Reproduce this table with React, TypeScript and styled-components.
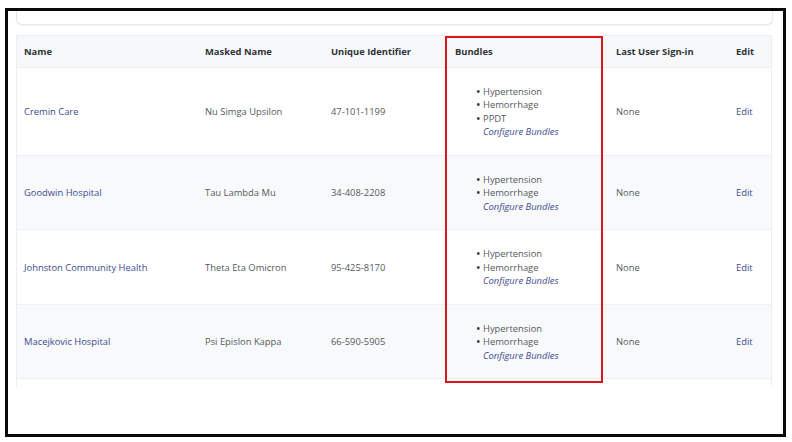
import React from "react";
import styled, { createGlobalStyle } from "styled-components";

const Global = createGlobalStyle`
  html, body { margin: 0; padding: 0; background: #ffffff; }
  body { font-family: "Open Sans", "Liberation Sans", sans-serif; }
  * { box-sizing: border-box; }
`;

const Frame = styled.div`
  margin: 8px 0 0 5px;
  width: 781px;
  height: 429px;
  border: 3px solid #0a0a0a;
  background: #ffffff;
  overflow: hidden;
  padding: 0 10px 0 8px;
  display: flex;
  flex-direction: column;
`;

const TopCard = styled.div`
  height: 14px;
  border: 1px solid #e4e6ea;
  border-top: none;
  border-radius: 0 0 6px 6px;
  box-shadow: 0 1px 2px rgba(0, 0, 0, 0.05);
  background: #ffffff;
`;

const TableWrap = styled.div`
  position: relative;
  margin-top: 10px;
  width: 756px;
  border-left: 1px solid #eceef1;
  border-right: 1px solid #eceef1;
  padding-bottom: 8px;
`;

const COLS = "181px 126px 124px 161px 120px 43px";

const HeaderRow = styled.div`
  display: grid;
  grid-template-columns: ${COLS};
  background: #f7f8fa;
  border-top: 1px solid #eceef1;
  border-bottom: 1px solid #eceef1;
`;

const HeadCell = styled.div`
  padding: 9px 8px 8px 7px;
  font-size: 9.4px;
  line-height: 13.5px;
  font-weight: 700;
  color: #2f3337;
  white-space: nowrap;
`;

const Row = styled.div<{ $shaded: boolean }>`
  display: grid;
  grid-template-columns: ${COLS};
  background: ${(p) => (p.$shaded ? "#f8f9fb" : "#ffffff")};
  border-bottom: 1px solid #eef0f3;
`;

const Cell = styled.div`
  padding: 17px 8px 16px 7px;
  font-size: 9.4px;
  line-height: 13.5px;
  color: #55595d;
  display: flex;
  align-items: center;
  white-space: nowrap;
`;

const LinkText = styled.span<{ $italic?: boolean }>`
  color: #3d4b8e;
  font-style: ${(p) => (p.$italic ? "italic" : "normal")};
`;

const BundleCell = styled.div`
  padding: 17px 8px 16px 7px;
  font-size: 9.4px;
  line-height: 13.5px;
  color: #55595d;
  white-space: nowrap;
`;

const BundleList = styled.ul`
  margin: 0;
  padding-left: 21px;
  list-style: none;
`;

const BundleItem = styled.li`
  display: flex;
  &::before {
    content: "•";
    width: 7px;
    font-size: 12px;
    line-height: 13.5px;
    color: #303336;
  }
`;

const Configure = styled.div`
  padding-left: 28px;
`;

const Highlight = styled.div`
  position: absolute;
  left: 428px;
  top: 1px;
  width: 158px;
  height: 347px;
  border: 2.5px solid #d8161d;
  pointer-events: none;
`;

type Item = {
  name: string;
  masked: string;
  id: string;
  bundles: string[];
};

const data: Item[] = [
  { name: "Cremin Care", masked: "Nu Simga Upsilon", id: "47-101-1199", bundles: ["Hypertension", "Hemorrhage", "PPDT"] },
  { name: "Goodwin Hospital", masked: "Tau Lambda Mu", id: "34-408-2208", bundles: ["Hypertension", "Hemorrhage"] },
  { name: "Johnston Community Health", masked: "Theta Eta Omicron", id: "95-425-8170", bundles: ["Hypertension", "Hemorrhage"] },
  { name: "Macejkovic Hospital", masked: "Psi Epislon Kappa", id: "66-590-5905", bundles: ["Hypertension", "Hemorrhage"] },
];

export default function App() {
  return (
    <>
      <Global />
      <Frame>
        <TopCard />
        <TableWrap>
          <HeaderRow>
            <HeadCell>Name</HeadCell>
            <HeadCell>Masked Name</HeadCell>
            <HeadCell>Unique Identifier</HeadCell>
            <HeadCell>Bundles</HeadCell>
            <HeadCell>Last User Sign-in</HeadCell>
            <HeadCell>Edit</HeadCell>
          </HeaderRow>
          {data.map((d, i) => (
            <Row key={d.name} $shaded={i % 2 === 1}>
              <Cell>
                <LinkText>{d.name}</LinkText>
              </Cell>
              <Cell>{d.masked}</Cell>
              <Cell>{d.id}</Cell>
              <BundleCell>
                <BundleList>
                  {d.bundles.map((b) => (
                    <BundleItem key={b}>{b}</BundleItem>
                  ))}
                </BundleList>
                <Configure>
                  <LinkText $italic>Configure Bundles</LinkText>
                </Configure>
              </BundleCell>
              <Cell>None</Cell>
              <Cell>
                <LinkText>Edit</LinkText>
              </Cell>
            </Row>
          ))}
          <Highlight />
        </TableWrap>
      </Frame>
    </>
  );
}
